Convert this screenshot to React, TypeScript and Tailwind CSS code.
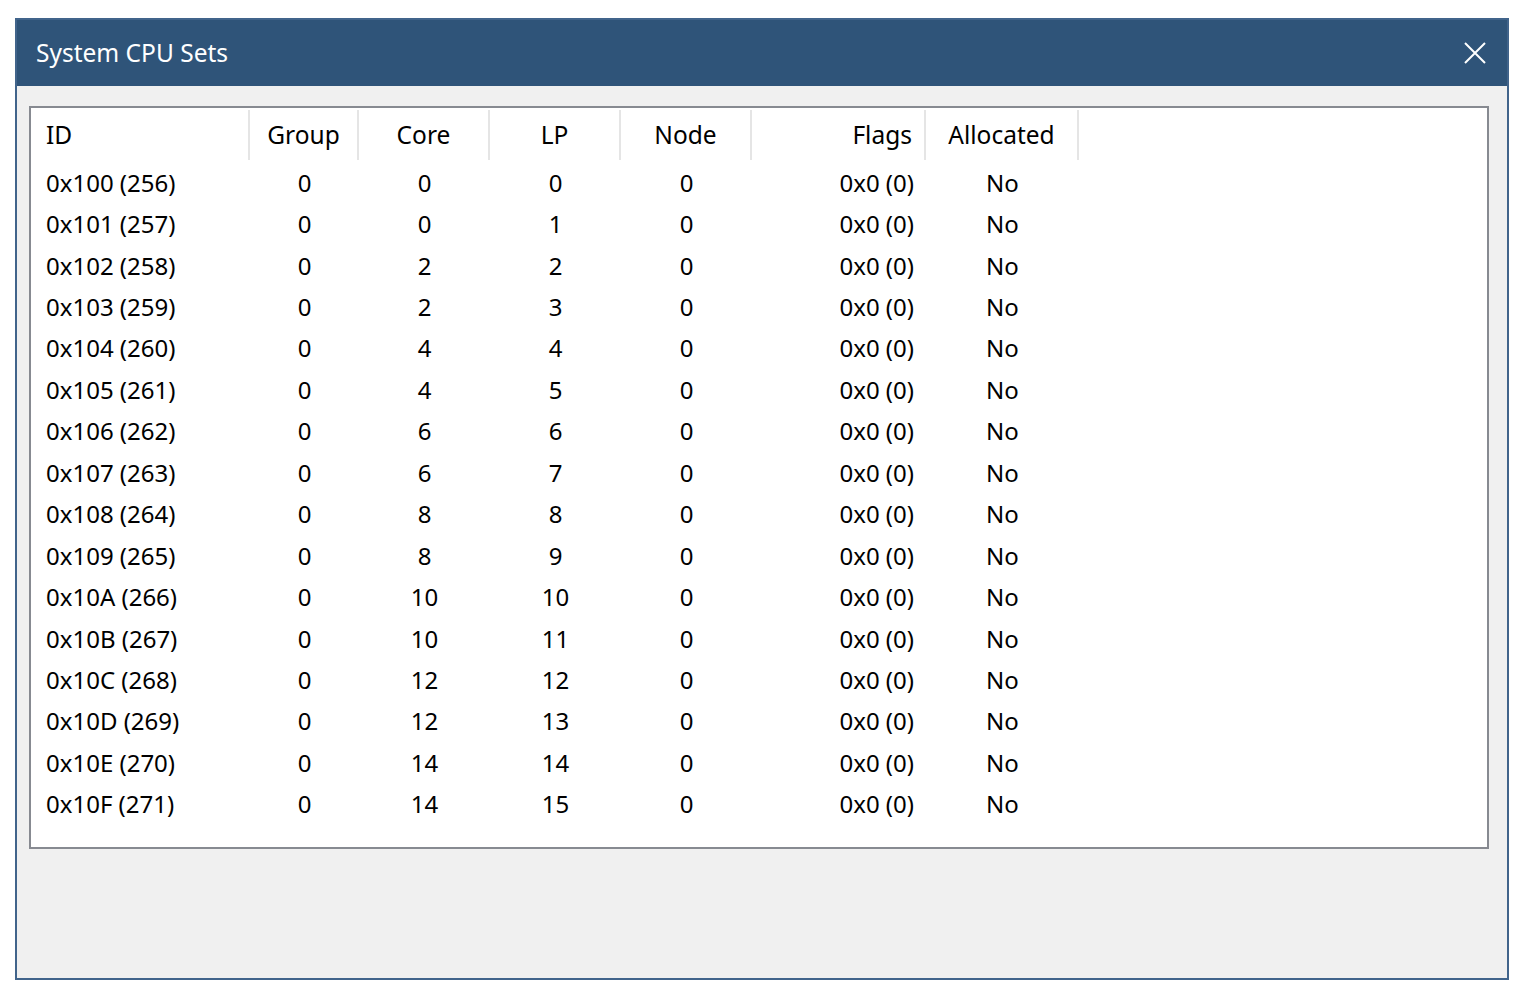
import React from 'react';

type Row = { id: string; group: number; core: number; lp: number; node: number; flags: string; allocated: string };

const rows: Row[] = Array.from({ length: 16 }, (_, i) => {
    const n = 0x100 + i;
    return {
        id: `0x${n.toString(16).toUpperCase()} (${n})`,
        group: 0,
        core: Math.floor(i / 2) * 2,
        lp: i,
        node: 0,
        flags: '0x0 (0)',
        allocated: 'No',
    };
});

const font = { fontFamily: '"Noto Sans", "Open Sans", sans-serif' };

const App: React.FC = () => {
    return (
        <div className="w-[1520px] h-[986px] bg-white pt-[18px] pl-[15px]" style={font}>
            <div className="w-[1494px] h-[962px] border-2 border-[#41648b] bg-[#f0f0f0] flex flex-col">
                {/* title bar */}
                <div className="h-[66px] bg-[#2f5479] flex items-center justify-between pl-[19px] pr-[20px]">
                    <span className="text-[24.5px] text-white">System CPU Sets</span>
                    <svg width="24" height="24" viewBox="0 0 24 24" className="text-white">
                        <path d="M2 2 L22 22 M22 2 L2 22" stroke="currentColor" strokeWidth="2" />
                    </svg>
                </div>

                {/* list view */}
                <div className="ml-[12px] mt-[20px] w-[1460px] h-[743px] border-2 border-[#878a91] bg-white">
                    <div className="flex h-[54px] text-[24.5px] text-black">
                        <div className="w-[219px] pl-[15px] flex items-center border-r-2 border-[#e5e5e5] my-[2px]">ID</div>
                        <div className="w-[109px] flex items-center justify-center border-r-2 border-[#e5e5e5] my-[2px]">Group</div>
                        <div className="w-[131px] flex items-center justify-center border-r-2 border-[#e5e5e5] my-[2px]">Core</div>
                        <div className="w-[131px] flex items-center justify-center border-r-2 border-[#e5e5e5] my-[2px]">LP</div>
                        <div className="w-[131px] flex items-center justify-center border-r-2 border-[#e5e5e5] my-[2px]">Node</div>
                        <div className="w-[174px] flex items-center justify-end pr-[12px] border-r-2 border-[#e5e5e5] my-[2px]">Flags</div>
                        <div className="w-[153px] flex items-center justify-center border-r-2 border-[#e5e5e5] my-[2px]">Allocated</div>
                    </div>
                    {rows.map((r) => (
                        <div key={r.id} className="flex h-[41.45px] items-center text-[24px] text-black">
                            <div className="w-[219px] pl-[15px]">{r.id}</div>
                            <div className="w-[109px] text-center">{r.group}</div>
                            <div className="w-[131px] text-center">{r.core}</div>
                            <div className="w-[131px] text-center">{r.lp}</div>
                            <div className="w-[131px] text-center">{r.node}</div>
                            <div className="w-[174px] text-right pr-[12px]">{r.flags}</div>
                            <div className="w-[153px] text-center">{r.allocated}</div>
                        </div>
                    ))}
                </div>
            </div>
        </div>
    );
};

export default App;
